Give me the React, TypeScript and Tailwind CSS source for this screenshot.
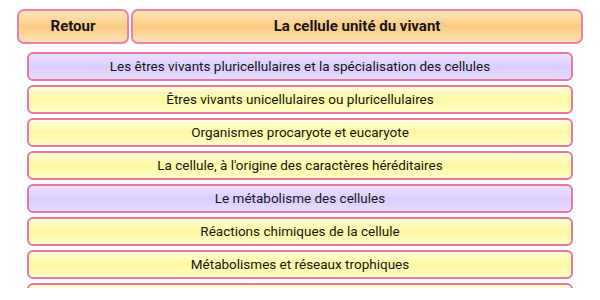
const items: { label: string; kind: "purple" | "yellow" }[] = [
  { label: "Les êtres vivants pluricellulaires et la spécialisation des cellules", kind: "purple" },
  { label: "Êtres vivants unicellulaires ou pluricellulaires", kind: "yellow" },
  { label: "Organismes procaryote et eucaryote", kind: "yellow" },
  { label: "La cellule, à l'origine des caractères héréditaires", kind: "yellow" },
  { label: "Le métabolisme des cellules", kind: "purple" },
  { label: "Réactions chimiques de la cellule", kind: "yellow" },
  { label: "Métabolismes et réseaux trophiques", kind: "yellow" },
  // next row is only peeking in at the bottom edge
  { label: "", kind: "yellow" },
];

export default function App() {
  return (
    <div className="h-[300px] w-[600px] bg-white font-['Roboto',sans-serif] text-[#161616]">
      <div className="flex gap-[2px] px-[17px] pt-[9px]">
        <div className="flex h-[35px] w-[112px] items-center justify-center rounded-[7px] border-2 border-[#ec80a6] bg-gradient-to-b from-[#fde6bd] via-[#fccb82] to-[#fde3b6] text-[15px] font-bold">
          Retour
        </div>
        <div className="flex h-[35px] flex-1 items-center justify-center rounded-[7px] border-2 border-[#ec80a6] bg-gradient-to-b from-[#fde6bd] via-[#fccb82] to-[#fde3b6] text-[15px] font-bold">
          La cellule unité du vivant
        </div>
      </div>
      <div className="mx-[27px] mt-[8px] flex h-[236px] flex-col gap-[4px] overflow-hidden">
        {items.map((item, i) => (
          <div
            key={i}
            className={
              item.kind === "purple"
                ? "flex h-[29px] shrink-0 items-center justify-center rounded-[6px] border-2 border-[#e8779e] bg-gradient-to-b from-[#ebe2ff] via-[#dacdff] to-[#e6dcff] text-[13.5px]"
                : "flex h-[29px] shrink-0 items-center justify-center rounded-[6px] border-2 border-[#e8779e] bg-gradient-to-b from-[#ffffd6] via-[#fff8a2] to-[#ffffc8] text-[13.5px]"
            }
          >
            {item.label}
          </div>
        ))}
      </div>
    </div>
  );
}
